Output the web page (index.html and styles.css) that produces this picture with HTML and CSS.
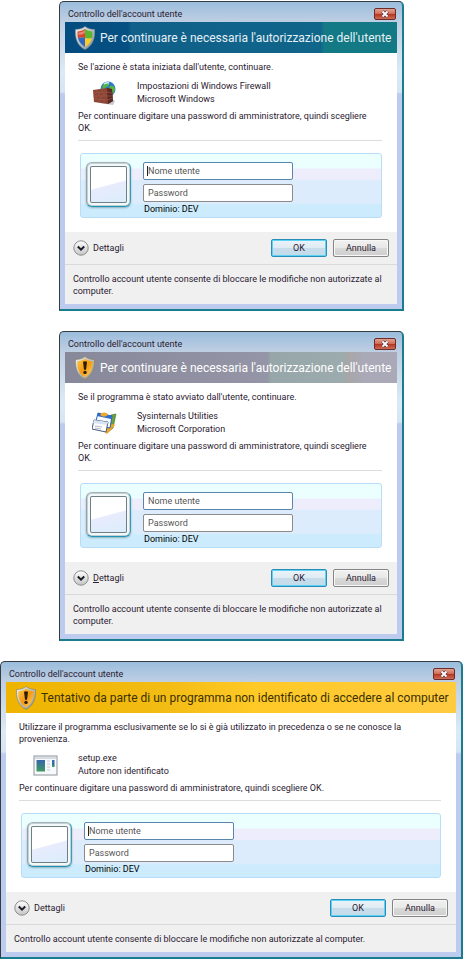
FILE: index.html
```html
<!DOCTYPE html>
<html lang="it">
<head>
    <meta charset="UTF-8">
    <meta name="viewport" content="width=device-width, initial-scale=1.0">
    <title>Controllo dell'account utente</title>
    <link rel="stylesheet" href="styles.css">
</head>
<body>
    <!-- shared icons -->
    <svg class="sprite" aria-hidden="true">
        <defs>
            <linearGradient id="silver" x1="0" y1="0" x2="1" y2="1">
                <stop offset="0" stop-color="#f4f6f6"/>
                <stop offset="1" stop-color="#7e8a8e"/>
            </linearGradient>
            <linearGradient id="amber" x1="0" y1="0" x2="1" y2="1">
                <stop offset="0" stop-color="#ffc94a"/>
                <stop offset="0.5" stop-color="#f59a10"/>
                <stop offset="1" stop-color="#fcd66c"/>
            </linearGradient>
            <linearGradient id="knob" x1="0" y1="0" x2="0" y2="1">
                <stop offset="0" stop-color="#ffffff"/>
                <stop offset="1" stop-color="#c4c4c4"/>
            </linearGradient>
        </defs>
        <symbol id="shield-windows" viewBox="0 0 20 24">
            <path d="M10 .5C12 2.500 16 3.500 19.500 3.500C20 13 17.500 19.500 10 23.500C2.500 19.500 0 13 .5 3.500C4 3.500 8 2.500 10 .5Z" fill="url(#silver)" stroke="#8d989b" stroke-width=".6"/>
            <path d="M10 3C8 4.500 5 5.500 2.600 5.500Q2.300 9 3 12Q6 11 10 12Z" fill="#d8452a"/>
            <path d="M10 3C12 4.500 15 5.500 17.400 5.500Q17.700 9 17 12Q14 13 10 12Z" fill="#5cb531"/>
            <path d="M3 12Q6 11 10 12V21C6 18.500 4 16 3 12Z" fill="#2c68c4"/>
            <path d="M17 12Q14 13 10 12V21C14 18.500 16 16 17 12Z" fill="#fbcb2b"/>
            <path d="M3.500 6.500Q8 6 10 4V7Q7 9 3.500 9Z" fill="#fff" opacity=".35"/>
        </symbol>
        <symbol id="shield-warning" viewBox="0 0 20 24">
            <path d="M10 .5C12 2.500 16 3.500 19.500 3.500C20 13 17.500 19.500 10 23.500C2.500 19.500 0 13 .5 3.500C4 3.500 8 2.500 10 .5Z" fill="url(#silver)" stroke="#8a7b58" stroke-width=".6"/>
            <path d="M10 2.600C8 4.300 5 5.300 2.300 5.300C2 13 4 17.800 10 21.400C16 17.800 18 13 17.700 5.300C15 5.300 12 4.300 10 2.600Z" fill="url(#amber)"/>
            <path d="M8 5.800Q10 4.600 12 5.800L11 13.800H9Z" fill="#2b1d05"/>
            <circle cx="10" cy="16.400" r="1.700" fill="#2b1d05"/>
        </symbol>
        <symbol id="chevron" viewBox="0 0 16 16">
            <circle cx="8" cy="8" r="7.200" fill="url(#knob)" stroke="#8e8e8e"/>
            <path d="M4.800 6.500L8 9.700L11.200 6.500" fill="none" stroke="#1c1c28" stroke-width="2"/>
        </symbol>
        <symbol id="cross" viewBox="0 0 10 8">
            <path d="M2.500 1.500L7.500 6.500M7.500 1.500L2.500 6.500" stroke="#5b3a42" stroke-width="3.400"/>
            <path d="M2.500 1.500L7.500 6.500M7.500 1.500L2.500 6.500" stroke="#fff" stroke-width="1.800"/>
        </symbol>
    </svg>

    <main class="page">
        <section class="window">
            <header class="titlebar">
                <span>Controllo dell'account utente</span>
                <button class="close" type="button" aria-label="Chiudi"><svg><use href="#cross"/></svg></button>
            </header>
            <h1 class="banner banner-blue">
                <svg class="shield"><use href="#shield-windows"/></svg>
                <span>Per continuare è necessaria l'autorizzazione dell'utente</span>
            </h1>
            <form class="dialog">
                <div class="content">
                    <p>Se l'azione è stata iniziata dall'utente, continuare.</p>
                    <div class="program">
                        <svg class="program-icon" viewBox="0 0 25 25">
                            <circle cx="16" cy="8" r="7.500" fill="#2d78c8"/>
                            <path d="M11 4Q14 0 17 2Q18 5 14 6L12 9L10 8ZM18 5Q22 4 23 8Q22 13 19 13L17 9Z" fill="#58b63c"/>
                            <path d="M12 3Q15 1 17 2" fill="none" stroke="#c8ecff" stroke-width="1.500"/>
                            <path d="M7 22L21 24L23 20L20 18Z" fill="#c5c8ce"/>
                            <path d="M1 9L15 7L20 8L21 20L16 23L2 21Z" fill="#8a4534"/>
                            <path d="M15 7L20 8L21 20L16 23Z" fill="#592b25"/>
                            <path d="M1 12L15 11L20 12M1 15L15 15L21 15M2 18L15 19L21 17M5 9V12M10 8V11M7 12V15M12 12V15M4 15V18M9 15V19M7 19V22M12 19V22" fill="none" stroke="#a55d4a" stroke-width=".6"/>
                        </svg>
                        <p>Impostazioni di Windows Firewall<br>Microsoft Windows</p>
                    </div>
                    <p>Per continuare digitare una password di amministratore, quindi scegliere OK.</p>
                    <hr>
                    <div class="credentials">
                        <div class="avatar"></div>
                        <div class="fields">
                            <input class="focused" type="text" placeholder="Nome utente" aria-label="Nome utente">
                            <input type="password" placeholder="Password" aria-label="Password">
                            <p class="domain">Dominio: DEV</p>
                        </div>
                    </div>
                </div>
                <div class="actions">
                    <button class="details" type="button"><svg><use href="#chevron"/></svg><span>Dettagli</span></button>
                    <button class="btn btn-default" type="button">OK</button>
                    <button class="btn" type="button">Annulla</button>
                </div>
                <p class="footnote">Controllo account utente consente di bloccare le modifiche non autorizzate al computer.</p>
            </form>
        </section>

        <section class="window">
            <header class="titlebar">
                <span>Controllo dell'account utente</span>
                <button class="close" type="button" aria-label="Chiudi"><svg><use href="#cross"/></svg></button>
            </header>
            <h1 class="banner banner-gray">
                <svg class="shield"><use href="#shield-warning"/></svg>
                <span>Per continuare è necessaria l'autorizzazione dell'utente</span>
            </h1>
            <form class="dialog">
                <div class="content">
                    <p>Se il programma è stato avviato dall'utente, continuare.</p>
                    <div class="program">
                        <svg class="program-icon" viewBox="0 0 25 25">
                            <path d="M19 4L24 3L21 17L15 22L12 20Z" fill="#6aa23c" stroke="#3d6d28" stroke-width=".6"/>
                            <path d="M12 20L20 13L23 14L15 23Z" fill="#f2a51e"/>
                            <path d="M6 2L20 5L18 17L3 14Z" fill="#f7fbff" stroke="#2b62b8"/>
                            <path d="M6 2L20 5L19 8L5 5Z" fill="#2c6cd0"/>
                            <ellipse cx="12" cy="3.500" rx="3.500" ry="2" fill="#f0a92b"/>
                            <path d="M2 9L16 11L14 21L0 18Z" fill="#fff" stroke="#4a5a78"/>
                            <path d="M2 9L16 11L15 14L1 12Z" fill="#d8e4f4"/>
                            <path d="M3 15L10 16M3 17L9 18" stroke="#9aa8bc" stroke-width=".8"/>
                        </svg>
                        <p>Sysinternals Utilities<br>Microsoft Corporation</p>
                    </div>
                    <p>Per continuare digitare una password di amministratore, quindi scegliere OK.</p>
                    <hr>
                    <div class="credentials">
                        <div class="avatar"></div>
                        <div class="fields">
                            <input class="active" type="text" placeholder="Nome utente" aria-label="Nome utente">
                            <input type="password" placeholder="Password" aria-label="Password">
                            <p class="domain">Dominio: DEV</p>
                        </div>
                    </div>
                </div>
                <div class="actions">
                    <button class="details" type="button"><svg><use href="#chevron"/></svg><span><u>D</u>ettagli</span></button>
                    <button class="btn btn-default" type="button">OK</button>
                    <button class="btn" type="button">Annulla</button>
                </div>
                <p class="footnote">Controllo account utente consente di bloccare le modifiche non autorizzate al computer.</p>
            </form>
        </section>

        <section class="window window-wide">
            <header class="titlebar">
                <span>Controllo dell'account utente</span>
                <button class="close" type="button" aria-label="Chiudi"><svg><use href="#cross"/></svg></button>
            </header>
            <h1 class="banner banner-yellow">
                <svg class="shield"><use href="#shield-warning"/></svg>
                <span>Tentativo da parte di un programma non identificato di accedere al computer</span>
            </h1>
            <form class="dialog">
                <div class="content">
                    <p>Utilizzare il programma esclusivamente se lo si è già utilizzato in precedenza o se ne conosce la provenienza.</p>
                    <div class="program">
                        <svg class="program-icon" viewBox="0 0 25 25">
                            <defs>
                                <linearGradient id="preview" x1="0" y1="0" x2="0" y2="1">
                                    <stop offset="0" stop-color="#3566a8"/>
                                    <stop offset="1" stop-color="#3f9a62"/>
                                </linearGradient>
                            </defs>
                            <rect x="1" y="3" width="23" height="19" fill="#f7f9fb" stroke="#8b949c"/>
                            <path d="M2 5H23" stroke="#d5dce3" stroke-width="2"/>
                            <rect x="3.500" y="7" width="8.500" height="11.500" fill="url(#preview)"/>
                            <path d="M14 8H17M14 11H17M14 14H17M14 17H17" stroke="#c4c9ce"/>
                            <rect x="19" y="7" width="2.500" height="6" fill="#326cae"/>
                            <rect x="19" y="12" width="2.500" height="2" fill="#3f9a62"/>
                        </svg>
                        <p>setup.exe<br>Autore non identificato</p>
                    </div>
                    <p>Per continuare digitare una password di amministratore, quindi scegliere OK.</p>
                    <hr>
                    <div class="credentials">
                        <div class="avatar"></div>
                        <div class="fields">
                            <input class="focused" type="text" placeholder="Nome utente" aria-label="Nome utente">
                            <input type="password" placeholder="Password" aria-label="Password">
                            <p class="domain">Dominio: DEV</p>
                        </div>
                    </div>
                </div>
                <div class="actions">
                    <button class="details" type="button"><svg><use href="#chevron"/></svg><span>Dettagli</span></button>
                    <button class="btn btn-default" type="button">OK</button>
                    <button class="btn" type="button">Annulla</button>
                </div>
                <p class="footnote">Controllo account utente consente di bloccare le modifiche non autorizzate al computer.</p>
            </form>
        </section>
    </main>
</body>
</html>
```
FILE: styles.css
```css
* {
    box-sizing: border-box;
}
body {
    margin: 0;
    background-color: #fff;
    color: #2b2030;
    font-family: Roboto, "Open Sans", sans-serif;
    font-size: 9px;
    line-height: 12px;
}
p {
    margin: 0;
}
button, input {
    font: inherit;
    color: inherit;
}
.sprite {
    display: block;
    width: 0;
    height: 0;
}
.page {
    display: flex;
    flex-direction: column;
    align-items: center;
    gap: 20px;
    padding: 1px 1px 1px 0;
}

/* window frame */
.window {
    width: 100%;
    max-width: 345px;
    padding: 0 5px 5px;
    border: 1px solid #343c40;
    border-right: 2px solid #1b7c8e;
    border-bottom: 2px solid #1b7c8e;
    border-radius: 5px 5px 0 0;
    background: linear-gradient(#9bbddd, #bfcfe3 20px, #dceaf5 70px, #d6e5f3 90px, #bccbee 92px);
}
.window-wide {
    max-width: none;
}
.titlebar {
    display: flex;
    align-items: center;
    justify-content: space-between;
    height: 20px;
    padding: 4px 1px 0 3px;
}
.close {
    display: flex;
    align-items: center;
    justify-content: center;
    width: 22px;
    height: 12px;
    padding: 0;
    border: 1px solid #6d2c2c;
    border-radius: 2px;
    background: linear-gradient(#e2a191, #cf6a54 50%, #b4321f 50%, #cd6d55);
}
.close svg {
    width: 10px;
    height: 8px;
}
.banner {
    display: flex;
    align-items: center;
    gap: 5px;
    min-height: 31px;
    margin: 0;
    padding: 0 6px 0 10px;
    font-size: 12px;
    font-weight: 400;
    line-height: 16px;
    white-space: nowrap;
}
.banner-blue {
    background: linear-gradient(90deg, #044c80, #055082 19%, #10608a 20%, #10658a 77%, #127985 78%);
    color: #e6f0f5;
}
.banner-gray {
    background: linear-gradient(90deg, #87889a, #9495a6 61%, #97a6a8 62%, #9cabad 84%, #a8a6a6 85%, #a9a9b8 90%);
    color: #fff;
}
.banner-yellow {
    background: linear-gradient(90deg, #efb400, #f3bc14 35%, #ffc926 55%, #ffcb40);
    color: #3a3000;
}
.shield {
    flex: none;
    width: 20px;
    height: 24px;
}

/* dialog body */
.content {
    padding: 8px 15px 14px 13px;
    background-color: #fff;
}
.program {
    display: flex;
    align-items: center;
    gap: 20px;
    padding: 7px 0 4px 14px;
    line-height: 13px;
}
.program-icon {
    flex: none;
    width: 25px;
    height: 25px;
}
hr {
    height: 1px;
    margin: 6px 0 12px;
    border: 0;
    background-color: #ddd;
}
.credentials {
    display: flex;
    gap: 12px;
    margin-left: 2px;
    padding: 8px 6px 2px 5px;
    border: 1px solid #b8ddf8;
    border-radius: 3px;
    background: linear-gradient(#ecffff 22%, #eeedfc 24%, #eeedfc 40%, #dcecfc 42%, #dcecfc 78%, #ccecfd 81%);
}
.avatar {
    width: 45px;
    height: 45px;
    border: 1px solid #9aabb0;
    border-color: #a5b2b6 #3b9cb8 #1f93b6 #8fa3aa;
    border-radius: 6px;
    box-shadow: inset 0 0 0 1px #c3d0d4, inset 0 0 0 3px #f3f8f9, inset 0 0 0 4px #6f7f86, 0 1px 2px #8fb0bb;
    background: linear-gradient(165deg, #fff 50%, #e8ecfc 52%, #d8edfc);
}
.fields {
    display: flex;
    flex-direction: column;
    gap: 4px;
    width: 150px;
}
.fields input {
    width: 100%;
    height: 18px;
    padding: 0 4px;
    border: 1px solid #8b8b8b;
    border-radius: 2px;
    background-color: #fff;
}
.fields input::placeholder {
    color: #555;
    opacity: 1;
}
.fields .focused, .fields .active {
    border-color: #5a85ad;
}
/* text cursor */
.fields .focused {
    background: linear-gradient(#222, #222) 3px 3px / 1px 10px no-repeat #fff;
}
.domain {
    margin-top: -3px;
    padding-left: 1px;
    color: #000;
}

/* bottom area */
.actions {
    display: flex;
    align-items: center;
    gap: 6px;
    padding: 7px 8px;
    border-bottom: 1px solid #d9d9d9;
    background-color: #f0f0f0;
}
.details {
    display: flex;
    align-items: center;
    gap: 4px;
    margin-right: auto;
    padding: 0;
    border: 0;
    background: none;
}
.details svg {
    width: 16px;
    height: 16px;
}
.btn {
    width: 56px;
    height: 18px;
    padding: 0;
    border: 1px solid #858585;
    border-radius: 2px;
    box-shadow: inset 0 0 0 1px #f8f8f8;
    background: linear-gradient(#f1f1f1, #e8e8e8 50%, #d9d9d9 50%, #cfcfcf);
}
.btn-default {
    border-color: #2a8cb8;
    box-shadow: inset 0 0 0 1px #5cd3f5;
    background: linear-gradient(#eaf3f8, #dfebf3 50%, #c8dcea 50%, #c3dcea);
}
.footnote {
    padding: 8px 8px 7px;
    background-color: #f0f0f0;
}
```
